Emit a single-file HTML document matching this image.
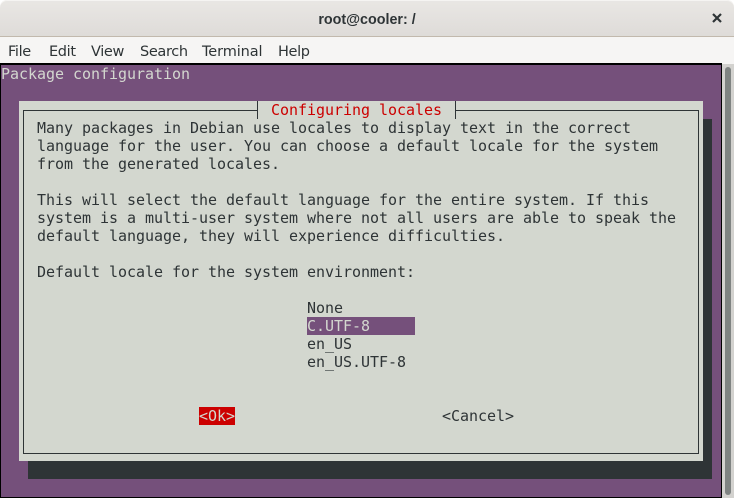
<!DOCTYPE html>
<html><head><meta charset="utf-8"><style>
html,body{margin:0;padding:0;background:#fff}
#r{position:relative;width:734px;height:498px;overflow:hidden;background:#fff}
#r div{position:absolute}
.t{font:15px/18px "DejaVu Sans Mono","Liberation Mono",monospace;letter-spacing:-0.03px;white-space:pre;height:18px;color:#2e3436}
.m{font:14.5px/20px "DejaVu Sans","Liberation Sans",sans-serif;color:#2e3436;top:42px;white-space:pre;letter-spacing:-0.35px}
</style></head><body><div id="r">
<div style="left:0;top:0;width:734px;height:37px;background:linear-gradient(#e9e7e4,#dedbd8);border-radius:7px 7px 0 0;box-shadow:inset 0 1px 0 #f5f4f2"></div>
<div style="left:0;top:36px;width:734px;height:1px;background:#c2b9ad"></div>
<div style="left:0;width:734px;top:10px;text-align:center;font:bold 14.3px/20px 'Liberation Sans',sans-serif;color:#2e3436;">root@cooler: /</div>
<svg style="position:absolute;left:711px;top:12px" width="12" height="12" viewBox="0 0 12 12"><path d="M2 2 L10 10 M10 2 L2 10" stroke="#2e3436" stroke-width="2.2" fill="none"/></svg>
<div style="left:0;top:37px;width:734px;height:27px;background:#f6f5f4"></div>
<div class="m" style="left:8px">File</div>
<div class="m" style="left:49px">Edit</div>
<div class="m" style="left:91px">View</div>
<div class="m" style="left:140px">Search</div>
<div class="m" style="left:202px;letter-spacing:-0.1px">Terminal</div>
<div class="m" style="left:278px">Help</div>
<div style="left:0;top:63px;width:722px;height:435px;background:#000"></div>
<div style="left:1px;top:65px;width:720px;height:432px;background:#75507b"></div>
<div style="left:722px;top:64px;width:12px;height:434px;background:#d3d2cf"></div>
<div style="left:725px;top:67px;width:6px;height:428px;background:#7f8382;border-radius:3px"></div>
<div class="t" style="left:1px;top:65px;color:#d3d7cf">Package configuration</div>
<div style="left:28px;top:119px;width:684px;height:360px;background:#2e3436"></div>
<div style="left:19px;top:101px;width:684px;height:360px;background:#d3d7cf"></div>
<div style="left:23px;top:110px;width:674px;height:342px;border:1px solid #2e3436"></div>
<div style="left:257px;top:101px;width:198px;height:18px;background:#d3d7cf"></div>
<div style="left:257px;top:101px;width:1px;height:18px;background:#2e3436"></div>
<div style="left:455px;top:101px;width:1px;height:18px;background:#2e3436"></div>
<div class="t" style="left:271px;top:101px;color:#cc0000">Configuring locales</div>
<div class="t" style="left:37px;top:119px">Many packages in Debian use locales to display text in the correct</div>
<div class="t" style="left:37px;top:137px">language for the user. You can choose a default locale for the system</div>
<div class="t" style="left:37px;top:155px">from the generated locales.</div>
<div class="t" style="left:37px;top:191px">This will select the default language for the entire system. If this</div>
<div class="t" style="left:37px;top:209px">system is a multi-user system where not all users are able to speak the</div>
<div class="t" style="left:37px;top:227px">default language, they will experience difficulties.</div>
<div class="t" style="left:37px;top:263px">Default locale for the system environment:</div>
<div class="t" style="left:307px;top:299px">None</div>
<div style="left:307px;top:317px;width:108px;height:18px;background:#75507b"></div>
<div class="t" style="left:307px;top:317px;color:#d3d7cf">C.UTF-8</div>
<div class="t" style="left:307px;top:335px">en_US</div>
<div class="t" style="left:307px;top:353px">en_US.UTF-8</div>
<div style="left:199px;top:407px;width:36px;height:18px;background:#cc0000"></div>
<div class="t" style="left:199px;top:407px;color:#d3d7cf">&lt;Ok&gt;</div>
<div class="t" style="left:442px;top:407px">&lt;Cancel&gt;</div>
</div></body></html>
